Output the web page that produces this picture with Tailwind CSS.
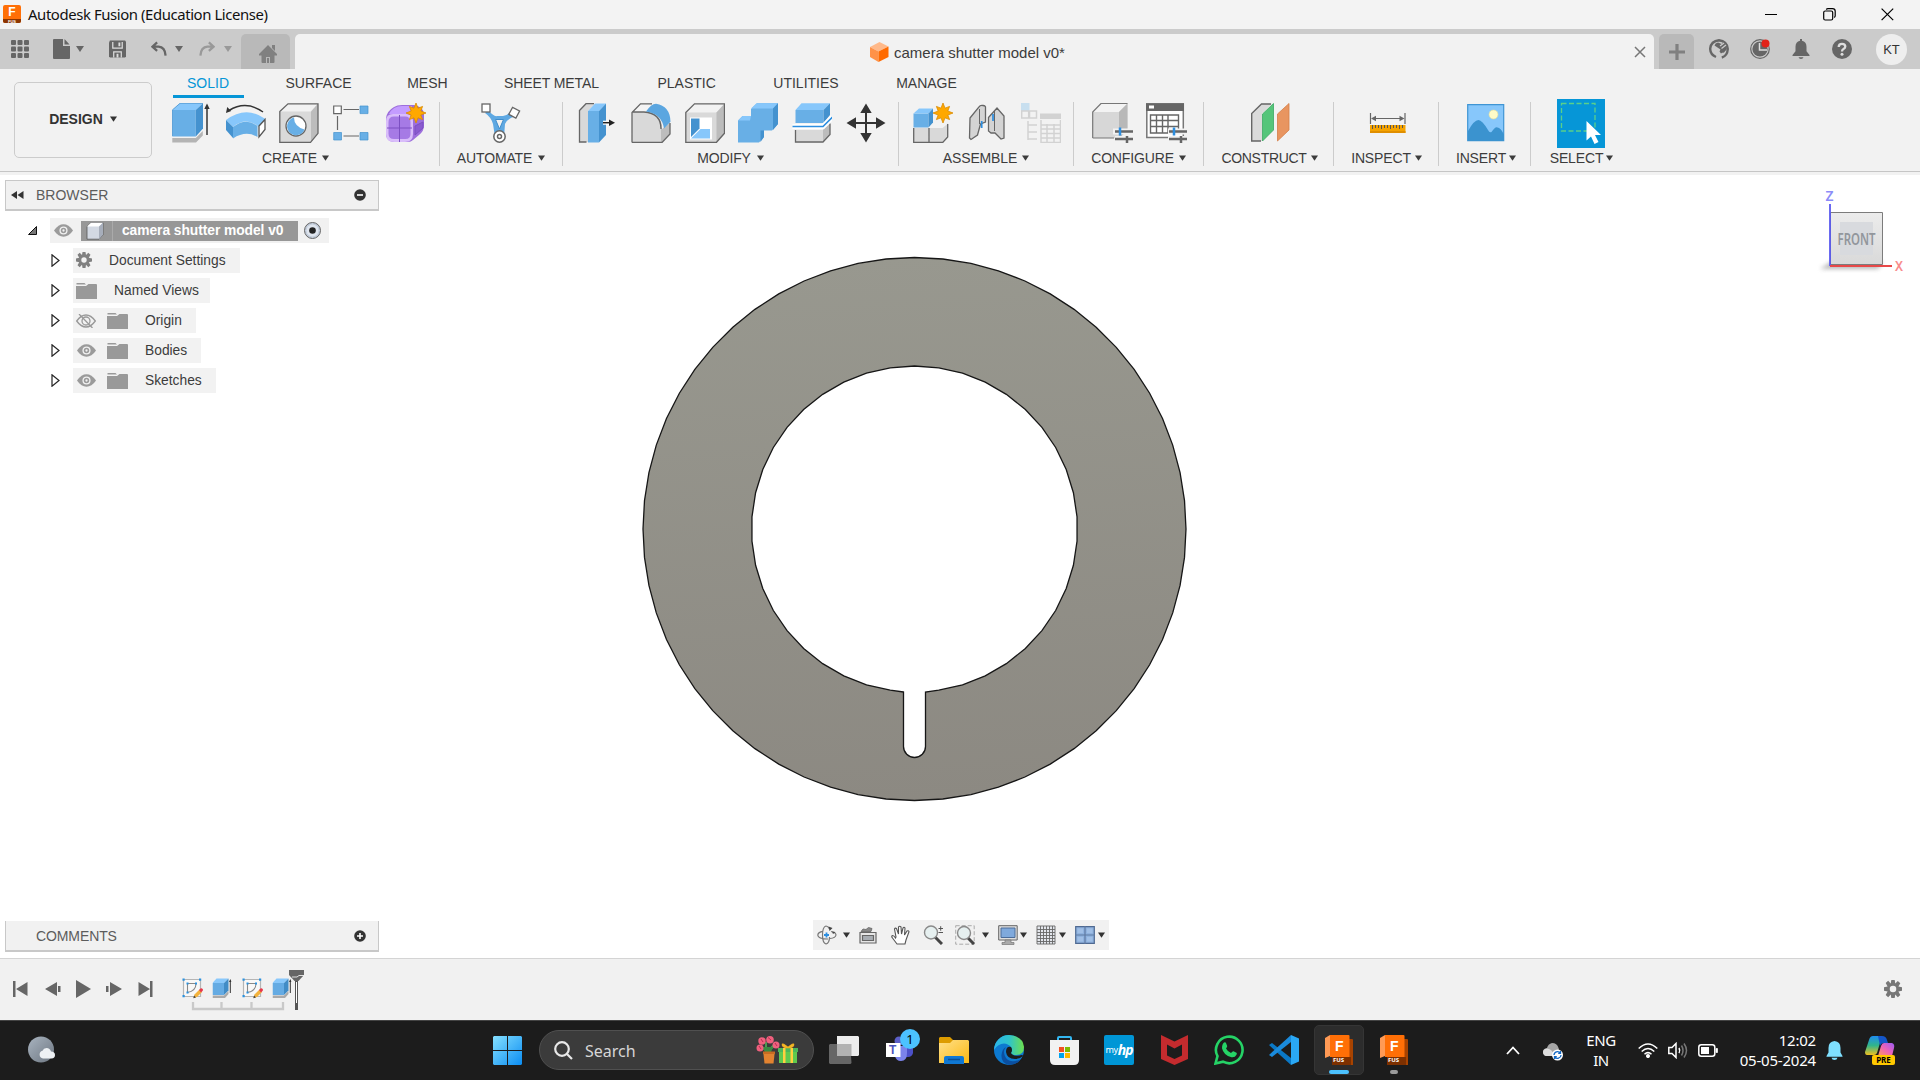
<!DOCTYPE html>
<html lang="en">
<head>
<meta charset="utf-8">
<title>Autodesk Fusion (Education License)</title>
<script src="https://cdn.jsdelivr.net/npm/@tailwindcss/browser@4"></script>
</head>
<body class="w-[1920px] h-[1080px] overflow-hidden flex flex-col bg-white text-[14px] leading-none text-[#3c3c3c] font-['Liberation_Sans',Arial,sans-serif]">

<!-- Shared symbols -->
<svg class="hidden">
  <symbol id="caret" viewBox="0 0 8 6"><path d="M0 0h8L4 6z" fill="currentColor"/></symbol>
  <symbol id="burst" viewBox="-10 -10 20 20"><path d="M0-10 2-4.8 6.6-6.6 4.8-2 10 0 4.8 2 6.6 6.6 2 4.8 0 10-2 4.8-6.6 6.6-4.8 2-10 0-4.8-2-6.6-6.6-2-4.8z" fill="#ffa800" stroke="#d98c00" stroke-width=".8"/></symbol>
  <symbol id="folder" viewBox="0 0 21 16"><path d="M.5 0h8l1.500 1.500H.5zM0 3h10l2.500-2H20a1 1 0 0 1 1 1v14H0z" fill="#999"/></symbol>
  <symbol id="eye" viewBox="0 0 20 13"><path d="M0 6.500C3 2 6.500 0 10 0s7 2 10 6.500C17 11 13.500 13 10 13S3 11 0 6.500z" fill="#9b9b9b"/><circle cx="10" cy="6.500" r="3.600" fill="none" stroke="#f1f1f1" stroke-width="1.400"/><circle cx="10" cy="6.500" r="1.200" fill="#f1f1f1"/></symbol>
  <symbol id="twist" viewBox="0 0 9 13"><path d="M1 .8v11.400L8 6.500z" fill="#fff" stroke="#222" stroke-width="1.200"/></symbol>
  <symbol id="sketch" viewBox="0 0 22 22"><path d="M2.500 2.500h17v17h-17z" fill="#f8f8f8" stroke="#b5b5b5" stroke-width="1.200"/><path d="M6.500 6.500h8.500c0 5-3 8-8.500 9z" fill="none" stroke="#888" stroke-width="1.100"/><path d="M1.500 1.500h2.200v2.200H1.500zM18 1.500h2.200v2.200H18zM1.500 18h2.200v2.200H1.500zM5.500 5.500h2v2h-2zM14 5.500h2v2h-2zM5.500 14.500h2v2h-2z" fill="#2a92e0"/><path d="m12.500 21 1-3.500 5-5 2.500 2.500-5 5z" fill="#f3b23c"/><path d="m18 13 1.500-1.500q1.500-.5 2.300.8.400 1-.3 1.700L20 15.500z" fill="#e8394a"/><path d="m12.300 21.200.8-2.700 1.900 1.900z" fill="#444"/></symbol>
  <symbol id="extr" viewBox="0 0 19 20"><path d="M0 5h11.500v12H0z" fill="#65abe3"/><path d="M0 5 4 .5h12L11.500 5z" fill="#89c8fb"/><path d="M11.500 5 16 .5v12L11.500 17z" fill="#418cc6"/><path d="M0 17.500h11.500l4.500-4.500v3L12.500 20H0z" fill="#aaa"/><path d="M17.800 4v11" stroke="#333"/><path d="m17.800 1 1.300 3h-2.600z" fill="#333"/></symbol>
  <symbol id="fusion" viewBox="0 0 28 30"><path d="M19 4h8a1 1 0 0 1 1 1v25H8V20z" fill="#a84300"/><path d="M5 0h18.500a1 1 0 0 1 1 1v21H5z" fill="#ff6f06"/><path d="M0 3 5 0v21l-5 2z" fill="#ff9a55"/><path d="M7 22h19v8H7z" fill="#7d3000"/></symbol>
</svg>

<!-- Title bar -->
<header class="h-[29px] shrink-0 flex items-center bg-[#f3f3f3] pl-[3px]">
  <div class="relative size-[18px] mt-[-1px] rounded-xs bg-[#ff6f06] overflow-hidden flex flex-col items-center text-white font-bold">
    <span class="text-[12px] leading-[14px]">F</span><span class="w-full h-1.5 bg-[#8c3500] text-[4px] leading-[6px] text-center">FUS</span>
  </div>
  <h1 class="ml-[7px] text-[14.900px] tracking-[-0.410px] text-[#111] font-['Noto_Sans','Open_Sans',sans-serif]">Autodesk Fusion (Education License)</h1>
  <div class="ml-auto mr-[26px] flex items-center gap-[45px] text-black">
    <svg width="13" height="13" viewBox="0 0 13 13"><path d="M0 6.500h12" stroke="currentColor"/></svg>
    <svg width="13" height="13" viewBox="0 0 13 13" fill="none" stroke="currentColor" stroke-width="1.200"><rect x=".7" y="3" width="9" height="9" rx="1.500"/><path d="M3.200 1.500Q4 .6 5 .6h4.500q2.700 0 2.700 2.700v4.500q0 1-1 1.700"/></svg>
    <svg width="13" height="13" viewBox="0 0 13 13"><path d="m.6.600 11.600 11.600M12.200.600.600 12.200" stroke="currentColor" stroke-width="1.200"/></svg>
  </div>
</header>

<!-- Quick access bar and document tabs -->
<div class="h-10 shrink-0 flex bg-[#cbcbcb] text-[#666]">
  <div class="w-[241px] flex items-center pl-[11px]">
    <svg width="18" height="18" viewBox="0 0 18 18" fill="currentColor"><rect width="5" height="5" rx="1"/><rect x="6.500" width="5" height="5" rx="1"/><rect x="13" width="5" height="5" rx="1"/><rect y="6.500" width="5" height="5" rx="1"/><rect x="6.500" y="6.500" width="5" height="5" rx="1"/><rect x="13" y="6.500" width="5" height="5" rx="1"/><rect y="13" width="5" height="5" rx="1"/><rect x="6.500" y="13" width="5" height="5" rx="1"/><rect x="13" y="13" width="5" height="5" rx="1"/></svg>
    <svg class="ml-6" width="17" height="20" viewBox="0 0 17 20" fill="currentColor"><path d="M1 0h9v7h7v12a1 1 0 0 1-1 1H1a1 1 0 0 1-1-1V1a1 1 0 0 1 1-1zM11.500 0 16.500 5.500h-5z"/></svg>
    <svg class="ml-[6px]" width="8" height="6"><use href="#caret"/></svg>
    <svg class="ml-[25px]" width="17" height="18" viewBox="0 0 18 18"><path d="M1 0h16l1 1v16l-1 1H1l-1-1V2z" fill="currentColor"/><path d="M4 1.500v6.500h10V1.500M5 18v-6h8v6" fill="none" stroke="#ddd" stroke-width="1.300"/><path d="M10 2h2v4h-2zM8 14h2v4H8z" fill="#ddd"/></svg>
    <svg class="ml-[25px]" width="16" height="16" viewBox="0 0 17 16" fill="none" stroke="currentColor" stroke-width="2.400"><path d="M6.500 1 1.500 5.500l5 4.500M2 5.500h6q7 .5 7.500 9.500"/></svg>
    <svg class="ml-2" width="8" height="6"><use href="#caret"/></svg>
    <svg class="ml-4 text-[#999]" width="16" height="16" viewBox="0 0 17 16" fill="none" stroke="currentColor" stroke-width="2.400"><path d="m10.500 1 5 4.500-5 4.500M15 5.500H9Q2 6 1.500 15"/></svg>
    <svg class="ml-[9px] text-[#999]" width="8" height="6"><use href="#caret"/></svg>
  </div>
  <div class="mt-[5px] w-[49px] rounded-t-[5px] bg-[#b9b9b9] flex items-center justify-center pt-1 pl-1">
    <svg width="18" height="18" viewBox="0 0 18 18" fill="#808080"><path d="M9 0 18 9v1.500h-2.500V17a1 1 0 0 1-1 1H11v-6H7v6H3.500a1 1 0 0 1-1-1v-6.500H0V9zM13 0h3v6l-3-3zM8 13h2v5H8z"/></svg>
  </div>
  <div class="mt-[5px] ml-[5px] w-[1359px] rounded-t-[5px] bg-[#f2f2f2] flex items-center pt-px pl-[575px] pr-2">
    <svg width="19" height="20" viewBox="0 0 19 20"><path d="m9.500 0 9 4.500-10 5L0 5z" fill="#ffb98a"/><path d="m0 5 8.500 4.500V20L0 15z" fill="#ff9248"/><path d="m8.500 9.500 10-5V15l-10 5z" fill="#ff6a00"/></svg>
    <span class="ml-[5px] pt-px text-[15px] text-[#3c3c3c]">camera shutter model v0*</span>
    <svg class="ml-auto" width="12" height="12" viewBox="0 0 12 12"><path d="m1 1 10 10M11 1 1 11" stroke="#777" stroke-width="1.500"/></svg>
  </div>
  <div class="mt-[5px] ml-[5px] w-[35px] rounded-t-[5px] bg-[#b9b9b9] flex items-center justify-center pl-px">
    <svg width="16" height="16" viewBox="0 0 16 16"><path d="M8 0v16M0 8h16" stroke="#808080" stroke-width="3.200"/></svg>
  </div>
  <div class="flex items-center pl-[15px] gap-[21px]">
    <svg width="20" height="20" viewBox="0 0 20 20"><path d="M7 18Q1 15.500 1.200 9.500 2 2 10 1.200q8 .8 8.800 8.800-.5 7-6 8.500" fill="none" stroke="currentColor" stroke-width="2.400"/><path d="M5.500 6.500Q6 4 9 3.500l3.500 1.500L14 3.500l1.500 1L17 7l1 3-3 3.500-3 1-1.500-2 1-2z" fill="currentColor"/><path d="m11 7 4-3M12.500 9.500l4.500-3.500M10 18l4-4" stroke="#cbcbcb" stroke-width="1.300"/></svg>
    <svg width="20" height="20" viewBox="0 0 20 20"><circle cx="10" cy="10" r="9.300" fill="none" stroke="currentColor" stroke-width="1.200"/><circle cx="10" cy="10" r="7.600" fill="currentColor"/><path d="M9.500 4v7H17" fill="none" stroke="#ddd" stroke-width="1.500"/><circle cx="15.500" cy="4.500" r="4" fill="#e2231a"/></svg>
    <svg width="20" height="20" viewBox="-1 0 20 20" fill="currentColor"><path d="M8 0h2v1.700q4.500 1 4.500 6v4.500L17.500 16v1H.5v-1l3-3.800V7.700q0-5 4.500-6zM6.500 18.200h5Q11 20 9 20t-2.500-1.800z"/></svg>
    <svg width="20" height="20" viewBox="0 0 20 20"><circle cx="10" cy="10" r="10" fill="currentColor"/><path d="M6.700 8q0-3.200 3.300-3.200T13.300 7.500Q13.300 9 11.500 10 10 10.800 10 12.500" fill="none" stroke="#ddd" stroke-width="2.300"/><circle cx="10" cy="15.300" r="1.500" fill="#ddd"/></svg>
    <span class="ml-[3px] size-[31px] rounded-full bg-[#eee] flex items-center justify-center text-[13px] text-[#333]">KT</span>
  </div>
</div>

<!-- Ribbon -->
<div class="h-[103px] shrink-0 flex bg-[#f2f2f2] border-b border-[#c6c6c6]">
  <button class="ml-[14px] mt-[13px] w-[138px] h-[76px] pb-0.5 rounded-[5px] border border-[#ccc] flex items-center justify-center gap-[7px] font-bold text-[#333]">DESIGN <svg width="7" height="6"><use href="#caret"/></svg></button>
  <div class="flex-1 flex flex-col">
    <nav class="h-[30px] flex gap-[56.500px] pl-[35px]">
      <a class="relative pt-[7px] text-[#0696d7]">SOLID<i class="absolute left-[-14px] top-[26px] w-[71px] h-[3px] bg-[#0696d7]"></i></a>
      <a class="pt-[7px]">SURFACE</a><a class="pt-[7px] ml-[-1px]">MESH</a><a class="pt-[7px] tracking-[-0.100px]">SHEET METAL</a><a class="pt-[7px] ml-[2px]">PLASTIC</a><a class="pt-[7px] ml-px">UTILITIES</a><a class="pt-[7px] ml-px">MANAGE</a>
    </nav>
    <div class="flex tracking-[-0.150px]">
      <!-- Create -->
      <section class="w-[288px] h-16 mt-[3px] border-r border-[#ccc] flex flex-col">
        <div class="flex gap-[13.500px] pl-5 h-[42px] pt-px">
          <svg width="40" height="40" viewBox="0 0 40 40"><path d="M.3 35h23.500l7-7v4.500L24 39.500H.3z" fill="#b4b4b4"/><path d="M.3 7h23.500v26.500H.3z" fill="#68afe6"/><path d="M.3 7 8 .3h23L23.800 7z" fill="#87c7fb"/><path d="M23.800 7 31 .3v25.200l-7.200 8z" fill="#4492cf"/><path d="M.3 33V7L8 .3h23" fill="none" stroke="#4492cf" stroke-width=".8"/><path d="M35 4v28" stroke="#333" stroke-width="1.500"/><path d="m35 .5 2.700 5.500h-5.400z" fill="#333"/></svg>
          <svg width="40" height="40" viewBox="0 0 40 40"><path d="M3 7.500Q20-3 37 9" fill="none" stroke="#333" stroke-width="1.500"/><path d="M0 10 1.200 4l4 4z" fill="#333"/><path d="M0 17Q20 2 39.500 16L33 24Q20 13 7 24z" fill="#87c7fb"/><path d="M0 17 7 24v11L0 27z" fill="#4492cf"/><path d="M7 24Q20 14 31.500 23v11Q20 27 7 35.500z" fill="#68afe6"/><path d="m33 23 6-6.500v10L33 34z" fill="#fff" stroke="#555" stroke-width="1.300"/></svg>
          <svg width="40" height="40" viewBox="0 0 40 40"><path d="M.8 9.500 9 .8h30v29.500l-7.500 9H.8z" fill="#d9d9d9"/><path d="M.8 8.500 9 .8h30L32 8.500z" fill="#f2f2f2"/><path d="m32 8.500 7-7.700v29.500l-7 9z" fill="#bcbcbc"/><path d="M.8 8.500 9 .8h30v29.500l-7.500 9H.8z" fill="none" stroke="#666" stroke-width="1.300"/><circle cx="17" cy="23" r="10" fill="#fff" stroke="#666" stroke-width="1.300"/><path d="M15 14.500q0 9 10.500 12A9 9 0 1 1 15 14.500z" fill="#68afe6"/></svg>
          <svg width="40" height="40" viewBox="0 0 40 40"><path d="M10.500 6.500H26M4.500 13v14M10.500 33H26" stroke="#666" stroke-width="1.200" fill="none"/><path d="M.7 3h7.600v7.600H.7z" fill="#fff" stroke="#666" stroke-width="1.200"/><path d="M27 3h8v7.600h-8zM.7 29.500h7.800V37H.7zM27 29.500h8V37h-8z" fill="#68afe6" stroke="#4492cf" stroke-width=".7"/></svg>
          <svg width="40" height="40" viewBox="0 0 40 40"><path d="M0 15Q1 8 8 4q3-2 8-2h12q8 1 10 8v13q0 5-5 9l-6 5q-2 2-5 2H8q-8-1-8-8z" fill="#9d6fdc"/><path d="M3 11q4-8 13-8h10q0 6-5 9z" fill="#c49cff"/><path d="M0 18q0-7 7-7h13q7 0 7 7v13q0 8-8 8H8q-8 0-8-8z" fill="#d9bdfa"/><path d="M2.500 19q0-5.500 5.500-5.500h11q5.500 0 5.500 5.500v12q0 5-5 5H8q-5.500 0-5.500-5.500z" fill="#a67ae5"/><path d="M13.500 12v27M1 25h25M29 23l8-4v6l-8 7z" stroke="#7c4fc2" fill="#8a5bcf"/><use href="#burst" x="20" y="0" width="20" height="20"/></svg>
        </div>
        <p class="mt-[7px] flex items-center justify-center gap-[5px]">CREATE <svg width="7" height="6"><use href="#caret"/></svg></p>
      </section>
      <!-- Automate -->
      <section class="w-[123px] h-16 mt-[3px] border-r border-[#ccc] flex flex-col">
        <div class="pl-[41px] h-[42px] pt-px">
          <svg width="40" height="40" viewBox="0 0 40 40"><path d="M7 7q6 7 9 6h6q6-1 9-6l5 6q-10 2-12 8l-1 13h-9l-2-13Q10 14 4 10z" fill="#5ea8e2"/><path d="m14.500 16.500h8L18.500 26z" fill="#f2f2f2" stroke="#3f8cca"/><rect x="1" y="1" width="8" height="8" fill="#fff" stroke="#666" stroke-width="1.300"/><rect x="29.500" y="5.500" width="8" height="8" transform="rotate(28 33 9)" fill="#fff" stroke="#666" stroke-width="1.300"/><circle cx="18.500" cy="33.500" r="5.700" fill="#fff" stroke="#666" stroke-width="1.500"/><circle cx="18.500" cy="33.500" r="2" fill="#fff" stroke="#666" stroke-width="1.500"/></svg>
        </div>
        <p class="mt-[7px] flex items-center justify-center gap-[6px]">AUTOMATE <svg width="7" height="6"><use href="#caret"/></svg></p>
      </section>
      <!-- Modify -->
      <section class="w-[336px] h-16 mt-[3px] border-r border-[#ccc] flex flex-col">
        <div class="flex gap-[13.800px] pl-[14px] h-[42px] pt-px">
          <svg width="40" height="40" viewBox="0 0 40 40"><path d="M2.500 7.500 9 .7h9L11 8v31H2.500z" fill="#d9d9d9"/><path d="M2.500 7.500 9 .7h8M2.500 7v32h7" fill="none" stroke="#666" stroke-width="1.300"/><path d="M11 8h11v31.500H11z" fill="#68afe6"/><path d="m11 8 7-7.500h11L22 8z" fill="#87c7fb"/><path d="m22 8 7-7.500V32l-7 7.500z" fill="#4492cf"/><path d="M26 19.700h8" stroke="#fff" stroke-width="4"/><path d="M26 19.700h8" stroke="#222" stroke-width="1.500"/><path d="m32 16.500 6 3.200-6 3.200z" fill="#222"/></svg>
          <svg width="40" height="40" viewBox="0 0 40 40"><path d="M1 10 9 .8h12l-5 7.700q15 2 15 17.500l8-6v11l-8 8.500H1z" fill="#bdbdbd"/><path d="M1 9h12q17 1 17 17v13H1z" fill="#d9d9d9"/><path d="M1 9 9 1h13l-7 8z" fill="#f4f4f4"/><path d="M1 39.500V9.500L9.500.8H21M39 20v11l-8 8.500H1M1 9h12q17 1 17 17" fill="none" stroke="#666" stroke-width="1.300"/><path d="M15 8.500Q20 1 25 .7q14 2 14.500 18L33 25.500Q31 11 15 8.500z" fill="#5ba6e0"/></svg>
          <svg width="40" height="40" viewBox="0 0 40 40"><path d="M.8 9.500 9 .8h30.500v29.500l-8 9H.8z" fill="#d9d9d9"/><path d="M.8 9.500 9.500.8h30L31.500 9.500z" fill="#f2f2f2"/><path d="m31.500 9.500 8-8.700v29.500l-8 9z" fill="#bcbcbc"/><path d="M.8 9.500 9.500.8h30v29.500l-8 9H.8z" fill="none" stroke="#666" stroke-width="1.300"/><path d="M5 14.500h22v22H5z" fill="#fff"/><path d="M6 15.500h8.500v10L6 34z" fill="#4492cf"/><path d="M6 35.500 15.500 26H25v9.500z" fill="#87c7fb"/></svg>
          <svg width="40" height="40" viewBox="0 0 40 40"><path d="M0 17.500 4.500 13H13V6l6-5.700h21V21l-6 6.500h-8V34l-5 5.500H0z" fill="#68afe6"/><path d="M13 5.500 18.500.3H40L35 5.500zM0 17.500 4.500 13H13l-1 4.500z" fill="#87c7fb"/><path d="m35 5.500 5-5.200V21l-5 6zM22.500 27.500H26V34l-3.500 5z" fill="#4492cf"/></svg>
          <svg width="40" height="40" viewBox="0 0 40 40"><path d="M3.500 7h28v13h-28z" fill="#68afe6"/><path d="m3.500 7 6-6.700h28.500L31.500 7z" fill="#87c7fb"/><path d="m31.500 7 6.500-6.700V12l-6.500 8z" fill="#4492cf"/><path d="M3.500 27H31l7-6.500v11L31 38.500H3.500z" fill="#d9d9d9"/><path d="m31 27 7-6.500v11l-7 7z" fill="#bcbcbc"/><path d="M38 20.500v11l-7 7.500H3.500V27" fill="none" stroke="#666" stroke-width="1.300"/><path d="M.5 23.500H31L40.500 14" fill="none" stroke="#fff" stroke-width="5"/><path d="M.5 23.500H31L40.500 14" fill="none" stroke="#2c8ee0" stroke-width="1.600"/></svg>
          <svg width="40" height="40" viewBox="0 0 40 40" fill="#333"><path d="M20 .5l5.700 9.500h-4.700v9H30v-4.700l9.500 5.700-9.500 5.700V21h-9v9h4.700L20 39.500 14.300 30H19v-9h-9v4.700L.5 20l9.500-5.700V19h9v-9h-4.700z"/></svg>
        </div>
        <p class="mt-[7px] flex items-center justify-center gap-[6px]">MODIFY <svg width="7" height="6"><use href="#caret"/></svg></p>
      </section>
      <!-- Assemble -->
      <section class="w-[175px] h-16 mt-[3px] border-r border-[#ccc] flex flex-col">
        <div class="flex gap-[14px] pl-[14px] h-[42px] pt-px">
          <svg width="40" height="40" viewBox="0 0 40 40"><path d="M.7 25h28l6-5v14l-5 5.500h-29z" fill="#d9d9d9"/><path d="m16 25 5-4.500h14L29.500 25z" fill="#f3f3f3"/><path d="M16 25v14.500M.7 25v14.500h29l5-5.500V21" fill="none" stroke="#666" stroke-width="1.300"/><path d="M.5 10.500h15v14H.5z" fill="#68afe6"/><path d="M.5 10.500 6 5.500h14l-4.500 5z" fill="#87c7fb"/><path d="m15.500 10.500 4.500-5v14l-4.500 5z" fill="#4492cf"/><use href="#burst" x="20" y="0" width="20" height="20"/></svg>
          <svg width="40" height="40" viewBox="0 0 40 40"><path d="M3 15 12 4q1-2 4-1.500 3 .5 2.500 2V19l-5 2-3 11L4 36.500 2.500 35zM21.500 14.500 30 5l7 8v22l-3 1-6-6h-4l-2.500-2z" fill="#d4d4d4" stroke="#666" stroke-width="1.300"/><path d="M12.500 6v15M27.500 8v20" stroke="#666"/><path d="M14.700 18v7M26 11v7" stroke="#2c8ee0" stroke-width="1.700"/></svg>
          <svg width="40" height="40" viewBox="0 0 40 40" fill="none" stroke="#d2d2d2" stroke-width="1.500"><path d="M0 0h8.500v8H0z" fill="#c8dfef" stroke="none"/><path d="M.7 8h7v7h-7zM8.500 8h7v7h-7zM7 18v19M7 22h9M7 29h9M7 36h9M20 17v22.500h19.500V17M20 22h20M20 26h20M20 30.500h20M20 35h20M26 21v18M33 21v18"/><path d="M19 10.500h21V16H19z" fill="#d2d2d2" stroke="none"/></svg>
        </div>
        <p class="mt-[7px] flex items-center justify-center gap-[5px]">ASSEMBLE <svg width="7" height="6"><use href="#caret"/></svg></p>
      </section>
      <!-- Configure -->
      <section class="w-[130px] h-16 mt-[3px] border-r border-[#ccc] flex flex-col">
        <div class="flex gap-[13px] pl-[18px] h-[42px] pt-px">
          <svg width="41" height="40" viewBox="0 0 41 40"><path d="M.7 9 9 .5h26.500V25L27 35H.7z" fill="#d7d7d7"/><path d="M.7 9 9 .5h26.500L27 9z" fill="#f3f3f3"/><path d="m27 9 8.500-8.500V28L27 35z" fill="#b8b8b8"/><path d="M.7 35V9L9 .5h26.500M.7 35H22" fill="none" stroke="#777" stroke-width="1.200"/><path d="M21 28.500h21M23 36h19" stroke="#f2f2f2" stroke-width="6"/><path d="M23 28.500h18M23 36h18M35 33v7" stroke="#666" stroke-width="2.500"/><path d="M28 24.500v8" stroke="#2c8ee0" stroke-width="2.500"/></svg>
          <svg width="41" height="40" viewBox="0 0 41 40"><path d="M.8 1h36.500v33.500H.8z" fill="#fff" stroke="#777" stroke-width="1.500"/><path d="M0 .3h38V8H0z" fill="#666"/><path d="M3 2.500h5v3H3z" fill="#fff"/><path d="M4.500 12h28v18h-28zM10.500 12v18M16.500 12v18M22 12v18M4.500 17.500h28M4.500 23.500h28" fill="none" stroke="#666" stroke-width="1.400"/><path d="M22 28.500h20M22 36h20" stroke="#f2f2f2" stroke-width="6"/><path d="M23 28.500h18M23 36h18M35 33v7" stroke="#666" stroke-width="2.500"/><path d="M28 24.500v8" stroke="#2c8ee0" stroke-width="2.500"/></svg>
        </div>
        <p class="mt-[7px] flex items-center justify-center gap-[5px]">CONFIGURE <svg width="7" height="6"><use href="#caret"/></svg></p>
      </section>
      <!-- Construct -->
      <section class="w-[130px] h-16 mt-[3px] border-r border-[#ccc] flex flex-col">
        <div class="pl-[46px] h-[42px] pt-px">
          <svg width="40" height="40" viewBox="0 0 40 40"><path d="M1.500 10.500 11.500.8H22L12 10.500v27.500H1.500z" fill="#dadada"/><path d="M21 1H11.500L1.700 10.500V38H11" fill="none" stroke="#666" stroke-width="1.400"/><path d="M12.500 11 23.500.5V27L12.500 38z" fill="#55c57a" stroke="#3aa862" stroke-width=".8"/><path d="M27.500 11 39 .5V27L27.500 38z" fill="#e89560" stroke="#d47e48" stroke-width=".8"/></svg>
        </div>
        <p class="mt-[7px] pl-0.5 flex items-center justify-center gap-1 tracking-[-0.300px]">CONSTRUCT <svg width="7" height="6"><use href="#caret"/></svg></p>
      </section>
      <!-- Inspect -->
      <section class="w-[105px] h-16 mt-[3px] border-r border-[#ccc] flex flex-col">
        <div class="pl-[34px] h-[42px] pt-px">
          <svg width="40" height="40" viewBox="0 0 40 40"><path d="M2 22h35.500v8H2z" fill="#f5a300"/><path d="M2 28h35.500v2H2z" fill="#e08f00"/><path d="M4.500 22v4M7.500 22v3M10.500 22v3M13.500 22v4M16.500 22v3M19.500 22v3M22.500 22v4M25.500 22v3M28.500 22v3M31.500 22v4M34.500 22v3" stroke="#555"/><path d="M2.500 10v11M37 10v11M5 15.500h30" stroke="#666" stroke-width="1.200"/><path d="m3 15.500 5-2.700v5.400zM36.500 15.500l-5-2.700v5.400z" fill="#666"/></svg>
        </div>
        <p class="mt-[7px] pl-px flex items-center justify-center gap-1">INSPECT <svg width="7" height="6"><use href="#caret"/></svg></p>
      </section>
      <!-- Insert -->
      <section class="w-[92px] h-16 mt-[3px] border-r border-[#ccc] flex flex-col">
        <div class="pl-[28px] h-[42px] pt-px">
          <svg width="38" height="40" viewBox="0 0 38 40"><path d="M.7 1.700h36v36H.7z" fill="#87c7fb" stroke="#3f95d4" stroke-width="1.200"/><path d="M1 28Q7 17 11.500 17 15 17 21 27q1.500 3 3.500 2 4-6 6-4.500 3 0 6.500 7v6.500H1z" fill="#3b93cf"/><circle cx="26.500" cy="11.500" r="4.500" fill="#fffbc8" stroke="#e4dd9a" stroke-width=".6"/></svg>
        </div>
        <p class="mt-[7px] pl-[3px] flex items-center justify-center gap-[3px]">INSERT <svg width="7" height="6"><use href="#caret"/></svg></p>
      </section>
      <!-- Select -->
      <section class="w-[101px] h-16 mt-[3px] flex flex-col">
        <div class="pl-[26px] h-[42px] mt-[-3px]">
          <svg width="48" height="49" viewBox="0 0 48 49"><path d="M0 0h48v49H0z" fill="#0696d7"/><path d="M4.500 4.500H38v27.500H4.500z" fill="none" stroke="#5ad08a" stroke-width="1.300" stroke-dasharray="5 2.500"/><path d="M29.500 22v19.500l4.500-4L37.500 45l4-2-3.500-7h6z" fill="#fff"/></svg>
        </div>
        <p class="mt-[10px] flex items-center justify-center gap-[3px]">SELECT <svg width="7" height="6"><use href="#caret"/></svg></p>
      </section>
    </div>
  </div>
</div>
<div class="h-[3px] shrink-0 bg-[#f2f2f2]"></div>

<!-- Canvas -->
<main class="relative h-[783px] shrink-0 flex flex-col pl-[5px] pt-[5px]">
  <!-- Model -->
  <svg class="absolute left-[640px] top-[79px]" width="550" height="550" viewBox="640 254 550 550">
    <defs><linearGradient id="metal" x1=".45" y1="0" x2=".5" y2="1"><stop offset="0" stop-color="#98988f"/><stop offset="1" stop-color="#8c8982"/></linearGradient></defs>
    <path id="ring" fill="url(#metal)" fill-rule="evenodd" stroke="#161616" stroke-width="1.300"/>
  </svg>

  <!-- Browser panel -->
  <div class="w-[374px] h-[31px] border border-b-2 border-[#c8c8c8] bg-[#f1f1f1] flex items-center pl-[5px] pr-3 text-[#5c5c5c]">
    <svg width="13" height="8" viewBox="0 0 13 8" fill="#333"><path d="M6 0v8L0 4zM12.500 0v8l-6-4z"/></svg>
    <span class="ml-3">BROWSER</span>
    <svg class="ml-auto" width="12" height="12" viewBox="0 0 12 12"><circle cx="6" cy="6" r="5.800" fill="#333"/><path d="M3 6h6" stroke="#fff" stroke-width="1.600"/></svg>
  </div>
  <div class="mt-[7px] flex flex-col gap-[5px] text-[13.800px]">
    <div class="h-[25px] flex items-center pl-[23px]">
      <svg width="9" height="9" viewBox="0 0 9 9"><path d="M8.500.5v8h-8z" fill="#777" stroke="#111"/></svg>
      <div class="ml-[13px] w-[279px] h-[25px] bg-[#f1f1f1] flex items-center pl-1">
        <svg width="19" height="13"><use href="#eye"/></svg>
        <div class="ml-[8px] w-[217px] h-5 bg-[#979797] flex items-center">
          <span class="w-8 h-full border-r border-[#aaa] pl-[5px] flex items-center"><svg width="18" height="18" viewBox="0 0 18 18"><path d="M1 4.500 5 .8h12v12l-4 4.400H1z" fill="#d3d9e3" stroke="#555" stroke-width=".8"/><path d="M1 4.500 5 .8h12l-4 3.700z" fill="#fff"/><path d="m13 4.500 4-3.700v12l-4 4.400z" fill="#a7aebb"/></svg></span>
          <b class="ml-[9px] text-white tracking-[-0.050px]">camera shutter model v0</b>
        </div>
        <svg class="ml-[6px]" width="17" height="17" viewBox="0 0 17 17"><circle cx="8.500" cy="8.500" r="8" fill="#c2ccda" stroke="#666"/><circle cx="8.500" cy="8.500" r="6" fill="#dfe5ee"/><circle cx="8.500" cy="8.500" r="3.300" fill="#222"/></svg>
      </div>
    </div>
    <div class="h-[25px] flex items-center pl-[46px]">
      <svg width="9" height="13"><use href="#twist"/></svg>
      <div class="ml-[13px] w-[167px] h-[25px] bg-[#f2f2f2] flex items-center pl-[3px]">
        <svg class="mt-[-2px]" width="16" height="16" viewBox="-8 -8 16 16" fill="#808080"><path d="M-1.500-8h3l.5 3 2.300-2.200 2.200 2L4.800-2.300 8-1.500v3l-3.200.8 1.700 3-2.200 2L2 4.800 1.500 8h-3L-2 4.800l-2.300 2.500-2.200-2 1.700-3L-8 1.500v-3l3.200-.8-1.700-3 2.200-2L-2-5z"/><circle r="2.700" fill="#f2f2f2"/></svg>
        <span class="ml-[17px]">Document Settings</span>
      </div>
    </div>
    <div class="h-[25px] flex items-center pl-[46px]">
      <svg width="9" height="13"><use href="#twist"/></svg>
      <div class="ml-[13px] w-[137px] h-[25px] bg-[#f2f2f2] flex items-center pl-[3px]">
        <svg width="21" height="16"><use href="#folder"/></svg><span class="ml-[17px]">Named Views</span>
      </div>
    </div>
    <div class="h-[25px] flex items-center pl-[46px]">
      <svg width="9" height="13"><use href="#twist"/></svg>
      <div class="ml-[13px] w-[123px] h-[25px] bg-[#f2f2f2] flex items-center pl-[3px]">
        <svg width="20" height="14" viewBox="0 0 20 14" fill="none" stroke="#999" stroke-width="1.300"><path d="M.7 7Q5 1 10 1t9.300 6Q15 13 10 13T.7 7z"/><circle cx="10" cy="7" r="4"/><path d="m3 0 13.500 14"/></svg>
        <svg class="ml-[11px]" width="21" height="16"><use href="#folder"/></svg><span class="ml-[17px]">Origin</span>
      </div>
    </div>
    <div class="h-[25px] flex items-center pl-[46px]">
      <svg width="9" height="13"><use href="#twist"/></svg>
      <div class="ml-[13px] w-[128px] h-[25px] bg-[#f2f2f2] flex items-center pl-1">
        <svg width="19" height="13"><use href="#eye"/></svg>
        <svg class="ml-[11px]" width="21" height="16"><use href="#folder"/></svg><span class="ml-[17px]">Bodies</span>
      </div>
    </div>
    <div class="h-[25px] flex items-center pl-[46px]">
      <svg width="9" height="13"><use href="#twist"/></svg>
      <div class="ml-[13px] w-[143px] h-[25px] bg-[#f2f2f2] flex items-center pl-1">
        <svg width="19" height="13"><use href="#eye"/></svg>
        <svg class="ml-[11px]" width="21" height="16"><use href="#folder"/></svg><span class="ml-[17px]">Sketches</span>
      </div>
    </div>
  </div>

  <!-- Comments panel -->
  <div class="mt-auto mb-[6px] w-[374px] h-[31px] border-x border-b-2 border-[#c8c8c8] bg-[#f1f1f1] flex items-center pl-[30px] pr-3 text-[#5c5c5c]">
    <span class="tracking-[-0.100px]">COMMENTS</span>
    <svg class="ml-auto" width="12" height="12" viewBox="0 0 12 12"><circle cx="6" cy="6" r="5.800" fill="#333"/><path d="M3 6h6M6 3v6" stroke="#fff" stroke-width="1.600"/></svg>
  </div>

  <!-- View cube -->
  <svg class="absolute left-[1815px] top-[10px] font-['Noto_Sans',sans-serif]" width="100" height="90" viewBox="1815 185 100 90">
    <defs><linearGradient id="cube" x1="0" y1="0" x2="0" y2="1"><stop offset="0" stop-color="#ececec"/><stop offset="1" stop-color="#d9d9d9"/></linearGradient><filter id="soft" x="-.2" y="-1" width="1.400" height="3"><feGaussianBlur stdDeviation="2"/></filter></defs>
    <path d="M1820 269h58l5-7h-52z" fill="#888" opacity=".6" filter="url(#soft)"/>
    <path d="M1830.500 212.500h52v52h-52z" fill="url(#cube)" stroke="#7c7c7c"/>
    <path d="M1840 222h33v33h-33z" fill="#d8dade"/>
    <text x="1837.500" y="244.500" font-size="15.500" font-weight="600" fill="#92969c" textLength="38" lengthAdjust="spacingAndGlyphs">FRONT</text>
    <path d="M1830 204v62" stroke="#5a5af0" stroke-width="1.800"/><path d="M1830 266h62" stroke="#e84848" stroke-width="2"/>
    <text x="1825.500" y="201" font-size="15" font-weight="600" fill="#8c8cf8" textLength="8" lengthAdjust="spacingAndGlyphs">Z</text>
    <text x="1895" y="271" font-size="15" font-weight="600" fill="#f88c8c" textLength="8" lengthAdjust="spacingAndGlyphs">X</text>
  </svg>

  <!-- Navigation toolbar -->
  <div class="absolute left-[813px] top-[745px] w-[296px] h-[30px] bg-[#f1f1f1] flex items-center pl-1 text-[#333]">
    <svg width="20" height="20" viewBox="0 0 20 20" fill="none" stroke="#777" stroke-width="1.200"><path d="M12 3.500Q11 1 9 1 5.500 2 5.500 10t3.500 9q3.500-1 3.500-7M14 6.500q5 1 5 3.500-.5 3-6 3.500M11 14Q1 14 .8 10.300.800 7 6 6.300"/><path d="m11.500 1.500 4 1.500-3 3zM15 6.500l3.500.5-2.500 2z" fill="#444" stroke="none"/><path d="M9.500 7.500v5M7 10h5" stroke="#2c8ee0" stroke-width="1.800"/></svg>
    <svg class="ml-[6px]" width="7" height="6"><use href="#caret"/></svg>
    <svg class="ml-[9px]" width="18" height="18" viewBox="0 0 18 18" fill="#e6e6e6" stroke="#666" stroke-width="1.200"><path d="M1 6.500h16v10.500H1z"/><path d="M3.500 9.500h11v5h-11z" fill="#a8adb3"/><path d="M2 5.500 4 3l3 .5L9.500 1.500 13 2.500l-1 3z" fill="#888" stroke-width=".8"/></svg>
    <svg class="ml-[14px]" width="20" height="20" viewBox="0 0 20 20"><path d="M6 19 1.500 13Q0 11 1.500 10.500 3 10.500 4.500 13L5 12 3.500 4Q4 2.500 5.500 3.500L7.500 9 7.500 2Q8.500.5 10 2l.5 7L12 3q1-1.500 2 0l-.5 7L16 6q1.500-.7 2 .7L15 15l-1 4z" fill="#fff" stroke="#555" stroke-width="1.100"/></svg>
    <svg class="ml-[12px]" width="20" height="20" viewBox="0 0 20 20"><path d="m12 12 7 7" stroke="#444" stroke-width="3"/><circle cx="8" cy="7.500" r="6.500" fill="#e6f0f0" stroke="#8a8a8a" stroke-width="1.400"/><path d="M15.500 3.500h4.500M17.700 1.200v4.500M15.500 7.500h4.500" stroke="#555"/></svg>
    <svg class="ml-[12px]" width="20" height="20" viewBox="0 0 20 20"><path d="M.7.700h18.500v18.500H.7z" fill="none" stroke="#aaa" stroke-dasharray="4 2"/><path d="m12 12 7 7" stroke="#444" stroke-width="3"/><circle cx="9" cy="8" r="6.500" fill="#e6f0f0" stroke="#8a8a8a" stroke-width="1.400"/></svg>
    <svg class="ml-[7px]" width="7" height="6"><use href="#caret"/></svg>
    <svg class="ml-[9px]" width="20" height="20" viewBox="0 0 20 20"><path d="M.7.700h18.500V15H.7z" fill="#ddd" stroke="#666"/><path d="M3 3h14v9.500H3z" fill="#7fa9dc" stroke="#4c6c98"/><path d="M7 15h6v2.500h3v2H4v-2h3z" fill="#aaa" stroke="#777" stroke-width=".7"/></svg>
    <svg class="ml-[2px]" width="7" height="6"><use href="#caret"/></svg>
    <svg class="ml-[9px]" width="20" height="20" viewBox="0 0 20 20"><path d="M1 1h18v18H1z" fill="#e3e6ec"/><path d="M1 1h18v18H1zM4.500 1v18M7.500 1v18M10.500 1v18M13.500 1v18M16.500 1v18M1 4.500h18M1 7.500h18M1 10.500h18M1 13.500h18M1 16.500h18" fill="none" stroke="#666" stroke-width=".9"/></svg>
    <svg class="ml-[3px]" width="7" height="6"><use href="#caret"/></svg>
    <svg class="ml-[9px]" width="20" height="18" viewBox="0 0 20 18"><path d="M.7.700h18.600v16.600H.7z" fill="#8fb2de" stroke="#4f6a92" stroke-width="1.200"/><path d="M10 0v18M0 9h20" stroke="#5f7aa2" stroke-width="1.200"/><path d="M2.500 2.500h5.500v4.500H2.500zM12 2.500h5.500v4.500H12zM2.500 11h5.500v4.500H2.500zM12 11h5.500v4.500H12z" fill="#a0bfe6"/></svg>
    <svg class="ml-[3px]" width="7" height="6"><use href="#caret"/></svg>
  </div>
</main>

<!-- Timeline -->
<footer class="h-[62px] shrink-0 bg-[#f1f1f1] border-t border-[#d4d4d4] flex items-center pl-[13px] pb-0.5 text-[#666]">
  <svg width="15" height="16" viewBox="0 0 15 16" fill="currentColor"><path d="M0 0h2.500v16H0zM14.500 1v14L3 8z"/></svg>
  <svg class="ml-[17px]" width="16" height="16" viewBox="0 0 16 16" fill="currentColor"><path d="M12 1v14L0 8zM13 5h2.500v6H13z"/></svg>
  <svg class="ml-[15px]" width="15" height="18" viewBox="0 0 15 18" fill="currentColor"><path d="M0 0v18l15-9z"/></svg>
  <svg class="ml-[15px]" width="16" height="16" viewBox="0 0 16 16" fill="currentColor"><path d="M4 1v14l12-7zM0 5h2.500v6H0z"/></svg>
  <svg class="ml-[16px]" width="15" height="16" viewBox="0 0 15 16" fill="currentColor"><path d="M12 0h2.500v16H12zM.5 1v14L12 8z"/></svg>
  <svg class="ml-[28px] self-start mt-[7px]" width="126" height="46" viewBox="182 966 126 46">
    <path d="M194 1002v7h90v-7M222.500 1002v7M252.500 1002v7" fill="none" stroke="#c9c9c9" stroke-width="2.300"/>
    <use href="#sketch" x="182" y="977" width="22" height="22"/><use href="#extr" x="213.500" y="978" width="19" height="20"/><use href="#sketch" x="242" y="977" width="22" height="22"/><use href="#extr" x="273.500" y="978" width="19" height="20"/>
    <path d="M290 970h15v5l-5.500 6h-4l-5.500-6z" fill="#666"/><path d="M297.500 981v29" stroke="#555" stroke-width="3"/><path d="M297.500 982v21" stroke="#fff"/><path d="M293 977h5l2-1.500h5" stroke="#fff" fill="none" stroke-width=".8"/>
  </svg>
  <svg class="ml-auto mr-[18px]" width="18" height="18" viewBox="-8 -8 16 16" fill="#777"><path d="M-1.500-8h3l.5 3 2.300-2.200 2.200 2L4.800-2.300 8-1.500v3l-3.200.8 1.700 3-2.200 2L2 4.800 1.500 8h-3L-2 4.800l-2.300 2.500-2.200-2 1.700-3L-8 1.500v-3l3.200-.8-1.700-3 2.200-2L-2-5z"/><circle r="2.900" fill="#f1f1f1"/></svg>
</footer>

<!-- Taskbar -->
<div class="h-[60px] shrink-0 bg-[#1c1c1c] border-t border-[#444] flex items-center pb-px text-white font-['Noto_Sans','Open_Sans',sans-serif]">
  <div class="w-[493px] pl-[27px]">
    <svg width="30" height="28" viewBox="0 0 30 28"><defs><linearGradient id="moon" x1="0" y1="0" x2="1" y2="1"><stop stop-color="#a9b4c0"/><stop offset="1" stop-color="#6d7681"/></linearGradient></defs><circle cx="14" cy="13.500" r="13" fill="url(#moon)"/><path d="M16 22.500a4 4 0 0 1-.5-7.800q1-2.700 4-2.700 3.500 0 4.500 3.500 4 .3 4 3.500t-3.500 3.500z" fill="#eef1f4"/></svg>
  </div>
  <svg width="29" height="29" viewBox="0 0 29 29"><defs><linearGradient id="win" x1="0" y1="0" x2="1" y2="1"><stop stop-color="#85e0ff"/><stop offset="1" stop-color="#0b8df2"/></linearGradient></defs><path d="M1 0h13v14H0V1zM15 0h13l1 1v13H15zM0 15h14v14H1l-1-1zM15 15h14v13l-1 1H15z" fill="url(#win)"/></svg>
  <div class="ml-[17px] w-[275px] h-10 rounded-full bg-[#3b3b3b] border border-[#505050] flex items-center pl-[14px] pr-[13px]">
    <svg width="19" height="19" viewBox="0 0 19 19" fill="none" stroke="#e8e8e8" stroke-width="2.200"><circle cx="8" cy="8" r="6.800"/><path d="m13 13 5 5"/></svg>
    <span class="ml-[12px] pt-0.5 text-[16px] text-[#d6d6d6]">Search</span>
    <svg class="ml-auto" width="44" height="28" viewBox="0 0 44 28"><path d="M10 15V6M12 15l6-6M10 14 4 11M14 14l6-7" stroke="#4c9a50" stroke-width="2"/><path d="M6 11h11l-2 5H9z" fill="#3b8a42"/><g fill="#f0607e"><circle cx="6" cy="5" r="3.700"/><circle cx="14" cy="3.800" r="3.800"/><circle cx="20" cy="9" r="3.500"/><circle cx="4" cy="12" r="3.500"/></g><path d="M12 1.500 15 4M5 3l2 3M19 7l2 3M3 10l2 3" stroke="#b92d50"/><path d="M7.500 16h11v2.500l-1 9h-9l-1-9z" fill="#e28330"/><path d="M7 15.500h12v2.500H7z" fill="#c96c22"/><path d="M22 12h20v4H22z" fill="#4bb65a"/><path d="M23 16h18v11H23z" fill="#5ec94e"/><path d="M27 12h2.500v15H27zM34.500 12h2.500v15h-2.500z" fill="#ffcf40"/><path d="M32 11.500q-6-5-5.500-2.500T32 11.500q6-5 5.500-2.500T32 11.500z" fill="#ffd95c" stroke="#f0b020" stroke-width="1.500"/></svg>
  </div>
  <div class="ml-[2.500px] flex items-center h-full">
    <div class="w-[55px] flex justify-center"><svg width="30" height="28" viewBox="0 0 30 28"><path d="M8 0h21l1 1v18l-1 1H8z" fill="#ededed"/><path d="M1 8h21v12l.5 7-1 1H1l-1-1V9z" fill="#666"/><path d="M8 8h14.500v12H8z" fill="#b2b2b2"/></svg></div>
    <div class="w-[55px] flex justify-center"><div class="relative">
      <svg width="36" height="34" viewBox="0 0 36 34"><circle cx="18" cy="8" r="4.500" fill="#5b5fc7"/><path d="M21 14h11v6q-1 4-5 4h-6z" fill="#4c50c8"/><path d="M14 13h12v7q0 8-6 8-5 0-6-5z" fill="#7b83eb"/><path d="M5 10h14.500v14H5z" fill="#fff"/></svg>
      <b class="absolute left-[8px] top-[11px] text-[12px] leading-[13px] text-[#4b53bc] font-['Liberation_Sans',sans-serif]">T</b>
      <span class="absolute left-[19px] top-[-4px] size-5 rounded-full bg-[#4cc2ff] text-black text-[13px] leading-5 text-center">1</span>
    </div></div>
    <div class="w-[55px] flex justify-center"><svg width="30" height="27" viewBox="0 0 30 27"><defs><linearGradient id="fold" x1="0" y1="0" x2="1" y2="1"><stop stop-color="#ffe08a"/><stop offset="1" stop-color="#fbb913"/></linearGradient></defs><path d="M1 0h10l3 3v6H0V1z" fill="#dd9c00"/><path d="M0 6h11l3-3h15l1 1v22H0z" fill="url(#fold)"/><path d="M5 27v-6q0-2 2-2h16q2 0 2 2v6z" fill="#0f78d4"/><path d="M9 22.500h12" stroke="#0a4f94" stroke-width="1.500"/></svg></div>
    <div class="w-[55px] flex justify-center"><svg width="30" height="30" viewBox="0 0 30 30"><defs><linearGradient id="edge1"><stop stop-color="#2bb5e8"/><stop offset=".5" stop-color="#2fc4cc"/><stop offset="1" stop-color="#6ee04c"/></linearGradient></defs><circle cx="15" cy="15" r="15" fill="#0d79d0"/><path d="M0 15A15 15 0 0 1 15 0q14 1 15 12 0 8-8 8-4 0-5-2 2-3 0-6-3-3.500-7-3.500Q4 8.500 0 15z" fill="url(#edge1)"/><path d="M12 12q-4 5 0 11 5 6 15 1-4 6-12 6Q7 28 7.500 20 8 14 12 12z" fill="#0b4fa0"/><path d="M17 12q-5-1-5 5 1 7 9 7 5 0 8-3-1 4-3 5 3 0 3-4 .5-2-1.500-2-2 1-5.500.700-4-.3-5-2.700 2-3 0-6z" fill="#1c1c1c"/></svg></div>
    <div class="w-[55px] flex justify-center"><svg width="29" height="29" viewBox="0 0 29 29"><path d="M8 6V2q0-1 1-1h11q1 0 1 1v4" fill="none" stroke="#33b6f0" stroke-width="2"/><path d="M0 4h29v20q0 5-5 5H5q-5 0-5-5z" fill="#f2f2f2"/><path d="M9 11h5v5H9z" fill="#f25022"/><path d="M15 11h5v5h-5z" fill="#7fba00"/><path d="M9 17h5v5H9z" fill="#00a4ef"/><path d="M15 17h5v5h-5z" fill="#ffb900"/></svg></div>
    <div class="w-[55px] flex justify-center"><div class="size-[30px] bg-[#0096d6] rounded-xs flex items-center justify-center text-[9px] pb-px tracking-[-0.300px]">my<b class="italic text-[14px] tracking-[-1px]">hp</b></div></div>
    <div class="w-[55px] flex justify-center"><svg width="27" height="30" viewBox="0 0 27 30"><path d="m0 0 13.500 6.500L27 0v24l-13.500 6L0 24zM6 9.500v11l7.500 3.500 7.500-3.500v-11l-7.500 4z" fill="#c42b2e" fill-rule="evenodd"/></svg></div>
    <div class="w-[55px] flex justify-center"><svg width="30" height="30" viewBox="0 0 30 30"><path d="m1.500 28.500 2-7.300A13.300 13.300 0 1 1 9 26.700z" fill="none" stroke="#25d366" stroke-width="2.600"/><path d="M10 7.500q1.500-.7 2 .5l1.200 3q.2.700-1.200 2.500 1.500 3 5 4.500 1.700-2 2.500-1.700l3 1.500q.7.400 0 2-1.500 3-5 2.500-8-2-9.500-9Q8 9 10 7.500z" fill="#25d366"/></svg></div>
    <div class="w-[55px] flex justify-center"><svg width="30" height="30" viewBox="0 0 30 30"><path d="m0 10 3-2 19 15v7z" fill="#0a78c6"/><path d="m0 20 3 2L22 7V0z" fill="#1a8bdc"/><path d="m22 0 8 3.500v23L22 30z" fill="#2aa8f5"/></svg></div>
    <div class="w-[55px] flex justify-center"><div class="relative w-[50px] h-[50px] rounded-[5px] bg-[#2c2c2c] border border-[#353535] flex justify-center pt-[9px]">
      <svg width="28" height="30"><use href="#fusion"/></svg>
      <b class="absolute left-[20px] top-[13px] text-[14px] leading-[14px] font-['Liberation_Sans',sans-serif]">F</b><b class="absolute left-[18px] top-[31px] text-[6px] leading-[7px]">FUS</b>
      <i class="absolute bottom-[0px] left-[14px] w-5 h-1 rounded-full bg-[#4cc2ff]"></i>
    </div></div>
    <div class="w-[55px] flex justify-center"><div class="relative w-[50px] h-[50px] flex justify-center pt-[10px]">
      <svg width="28" height="30"><use href="#fusion"/></svg>
      <b class="absolute left-[21px] top-[14px] text-[14px] leading-[14px] font-['Liberation_Sans',sans-serif]">F</b><b class="absolute left-[19px] top-[32px] text-[6px] leading-[7px]">FUS</b>
      <i class="absolute bottom-[1px] left-[21px] w-2 h-1 rounded-full bg-[#9a9a9a]"></i>
    </div></div>
  </div>
  <!-- System tray -->
  <div class="ml-auto flex items-center pr-[25px]">
    <svg width="14" height="9" viewBox="0 0 14 9" fill="none" stroke="#fff" stroke-width="1.800"><path d="m1 8 6-6.500L13 8"/></svg>
    <svg class="ml-[23px] mt-[3px]" width="20" height="18" viewBox="0 0 20 18"><path d="M3 13q-3-1-3-4 0-3.500 4-4Q5 1 9 0q5 0 6.500 5l2 5-5 3z" fill="#a5a5a5"/><path d="M3 13q-3-1-3-4 0-3 4-3.500 4 .5 6 4V13z" fill="#ddd"/><circle cx="14.500" cy="12" r="5.500" fill="#fff"/><path d="M11 12a3.500 3.500 0 0 1 6.300-2M18 12a3.500 3.500 0 0 1-6.300 2M17.500 8v2.300h-2.300M11.500 16v-2.300h2.300" fill="none" stroke="#1268c4" stroke-width="1.300"/></svg>
    <div class="ml-[21px] w-[34px] text-[15px] leading-5 text-center tracking-[-0.400px]">ENG<br>IN</div>
    <svg class="ml-[20px]" width="20" height="15" viewBox="0 0 20 15" fill="none" stroke="#fff" stroke-width="1.500"><path d="M.7 5.500q9.300-9 18.600 0M3.700 8.500q6.300-6 12.600 0M6.500 11.300q3.500-3.300 7 0"/><circle cx="10" cy="13" r="1.300" fill="#fff"/></svg>
    <svg class="ml-[10px]" width="20" height="17" viewBox="0 0 20 17" fill="none" stroke="#fff" stroke-width="1.500"><path d="M.8 5.500H4L8 1.500v14L4 11.500H.8z"/><path d="M11 6q1.500 2.500 0 5"/><path d="M13.500 3.500q3 5 0 10M16 1.500q5 7 0 14" stroke="#777"/></svg>
    <svg class="ml-[10px]" width="20" height="13" viewBox="0 0 20 13"><rect x=".8" y=".8" width="16" height="11.400" rx="2.500" fill="none" stroke="#fff" stroke-width="1.500"/><path d="M3 3h8v7H3z" fill="#fff"/><path d="M18 4.500h1.500v4H18z" fill="#fff" stroke="#fff" stroke-width=".7"/></svg>
    <div class="ml-[18px] w-[80px] flex flex-col items-end text-[15px] leading-5 whitespace-nowrap tracking-[-0.200px]"><span>12:02</span><span>05-05-2024</span></div>
    <svg class="ml-[10px]" width="17" height="19" viewBox="0 0 17 19" fill="#7fe0ff"><path d="M8.500 0Q14.500.5 14.500 7v4.500L16.500 15v.8H.5V15l2-3.500V7Q2.500.5 8.500 0zM5.500 16.800h6Q11 19 8.500 19t-3-2.200z"/></svg>
    <div class="relative ml-[22px] w-[30px] h-[29px]">
      <svg width="30" height="29" viewBox="0 0 30 29"><defs><linearGradient id="co1" x1="0" y1="0" x2="0" y2="1"><stop stop-color="#1e8df0"/><stop offset=".5" stop-color="#30b58a"/><stop offset="1" stop-color="#f0c020"/></linearGradient><linearGradient id="co2" x1="1" y1="0" x2="0" y2="1"><stop stop-color="#9a5cf5"/><stop offset=".5" stop-color="#ee63b8"/><stop offset="1" stop-color="#ff9a5c"/></linearGradient></defs><path d="M8 0h9l-5 17q-1 2-3 2H2q-2 0-2-3L4 4q1-4 4-4z" fill="url(#co1)"/><path d="M13 0h4q4 0 5 4l1 3h-4q-3 0-4 3z" fill="#1456c8"/><path d="M19 7h8q3 1 2 5l-2 8H13l3-10q1-3 3-3z" fill="url(#co2)"/></svg>
      <b class="absolute left-[7px] top-[19px] w-[23px] h-[10px] rounded-xs bg-[#ffc800] text-black text-[8px] leading-[10px] text-center">PRE</b>
    </div>
  </div>
</div>

<script>
  // Faceted ring outline: 60-sided rim and a 42-sided bore with a rounded slot at the bottom.
  const cx = 914.5, cy = 529;
  const pt = (r, a) => (cx + r * Math.sin(a)).toFixed(2) + ' ' + (cy - r * Math.cos(a)).toFixed(2);
  const outer = Array.from({length: 60}, (_, i) => pt(271.5, i * Math.PI / 30));
  const inner = [];
  for (let i = -20; i <= 20; i++) inner.push(pt(163, i * Math.PI / 21));
  document.getElementById('ring').setAttribute('d',
    'M' + outer.join('L') + 'ZM903.5 692L' + inner.join('L') + 'L925.5 692V746.500A11 11 0 0 1 903.5 746.500Z');
</script>
</body>
</html>
